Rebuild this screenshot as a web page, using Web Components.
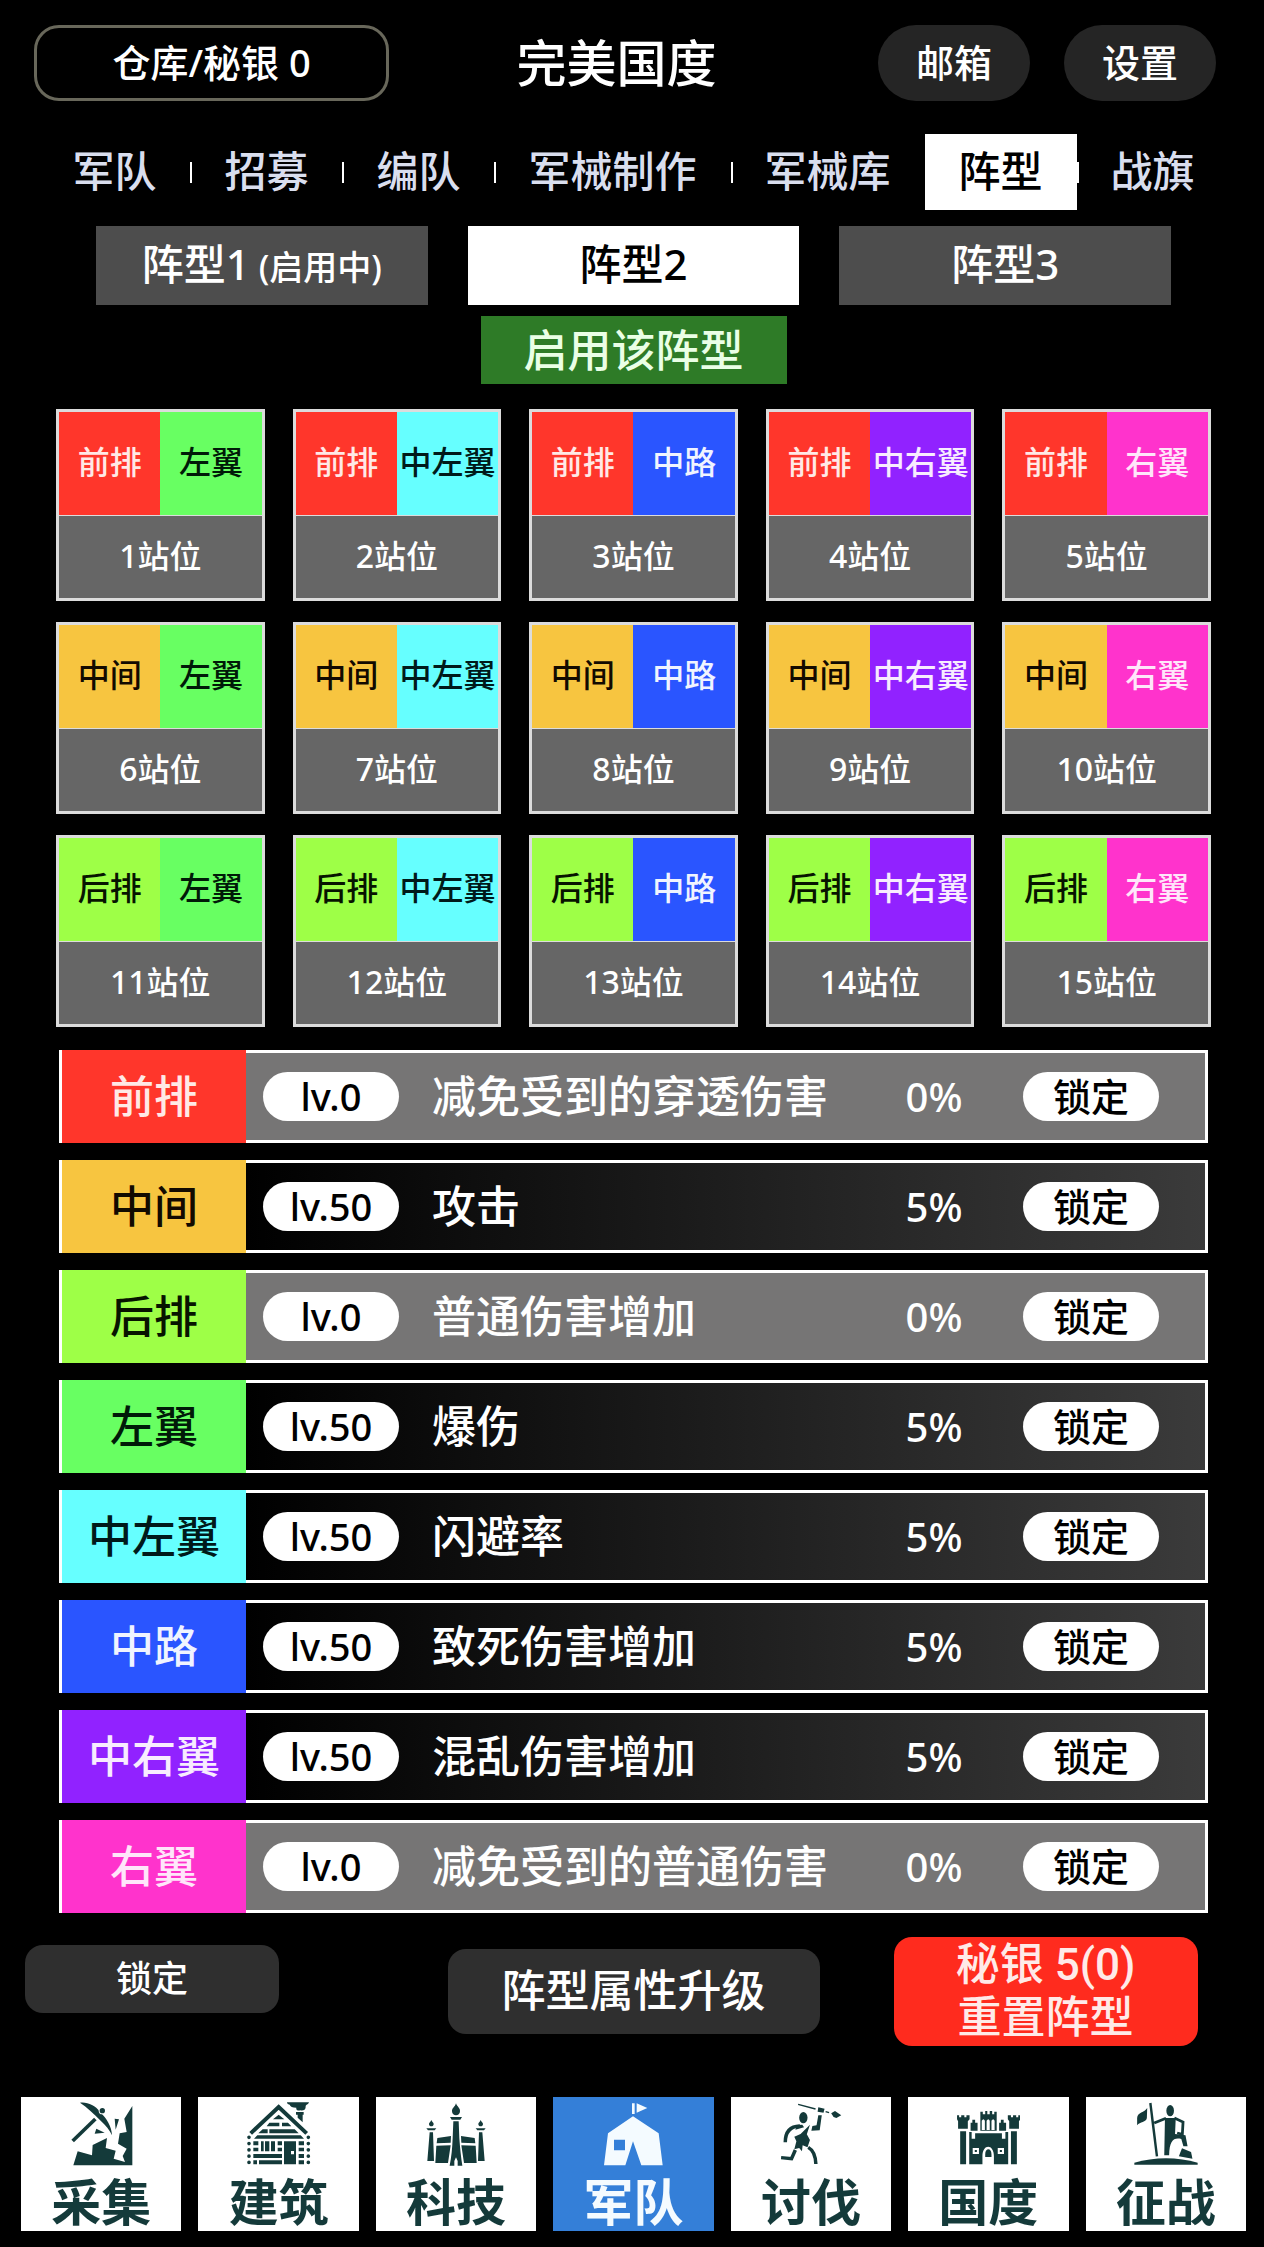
<!DOCTYPE html>
<html lang="zh-CN">
<head>
<meta charset="utf-8">
<meta name="viewport" content="width=device-width, initial-scale=1">
<title>完美国度</title>
<style>
  html {
    background: #000;
  }

  body {
    margin: 0;
    color: #fff;
    font-family: "Noto Sans", "Noto Sans CJK SC", sans-serif;
    font-weight: 500;
  }
</style>
</head>
<body>
<game-app></game-app>

<script>
(function registerFormationScreen() {
  'use strict';

  const ZONES = {
    front: { label: '前排', color: '#ff362b', ink: '#ffe9e6' },
    middle: { label: '中间', color: '#f7c540', ink: '#120a00' },
    back: { label: '后排', color: '#9eff47', ink: '#071400' },
    left: { label: '左翼', color: '#68ff62', ink: '#001a08' },
    midLeft: { label: '中左翼', color: '#66ffff', ink: '#001a1a' },
    center: { label: '中路', color: '#2a55ff', ink: '#f0f4ff' },
    midRight: { label: '中右翼', color: '#9122ff', ink: '#f8ecff' },
    right: { label: '右翼', color: '#ff33cc', ink: '#ffe6fa' }
  };

  const ROWS = ['front', 'middle', 'back'];
  const COLUMNS = ['left', 'midLeft', 'center', 'midRight', 'right'];

  const ATTRIBUTES = [
    { zone: 'front', level: 0, name: '减免受到的穿透伤害', value: '0%' },
    { zone: 'middle', level: 50, name: '攻击', value: '5%' },
    { zone: 'back', level: 0, name: '普通伤害增加', value: '0%' },
    { zone: 'left', level: 50, name: '爆伤', value: '5%' },
    { zone: 'midLeft', level: 50, name: '闪避率', value: '5%' },
    { zone: 'center', level: 50, name: '致死伤害增加', value: '5%' },
    { zone: 'midRight', level: 50, name: '混乱伤害增加', value: '5%' },
    { zone: 'right', level: 0, name: '减免受到的普通伤害', value: '0%' }
  ];

  const TABS = ['军队', '招募', '编队', '军械制作', '军械库', '阵型', '战旗'];

  const ICONS = {
    // pickaxe and cliff
    gather: {
      box: '208 65 192 195',
      body: `
        <path d="M398 80 374 118l7 40-21 4-5 31 26 15-12 22 7 18-34-10 6-24-30-8 4-30-43 21-2 31-43-12-13 42h177z"/>
        <path d="M241 70c22-3 45 8 60 27 20 21 35 43 36 71-7-16-19-30-34-44-20-20-41-40-62-54z"/>
        <circle cx="308" cy="94" r="11" fill="#fff"/>
        <circle cx="308" cy="94" r="8"/>
        <path d="M287 119 219 185" fill="none" stroke="currentColor" stroke-width="11"/>
        <path d="M345 118l13 2-10 31zM290 148l25 12-30 3z"/>`
    },
    // log cabin
    build: {
      box: '741 65 192 195',
      body: `
        <path d="M752 162 836 83l84 79" fill="none" stroke="currentColor" stroke-width="12"/>
        <path d="M861 69h66c-2 8-11 6-10 14 0 9-8 12-16 10-8 2-14-2-12-8-12 0-18-4-20-9-6 0-8-4-8-7zM888 98h23v8h-3v23l-15-14v-9h-5z"/>
        <path d="M836 106l17 14h-34zM808 130h30v11h-38zM846 130h18l10 11h-28zM788 150h15v12h-28zM808 150h76l12 12h-88zM762 178l10-10h130l10 10z"/>
        <path d="M760 186h15v12h-15zM760 205h15v11h-15zM760 224h86v12h-86zM760 243h11v12h-11zM777 243h69v12h-69z"/>
        <path d="M783 186h8v30h-8zM795 186h13v30h-13zM813 186h12v30h-12zM833 186h13v12h-13zM833 205h13v11h-13z"/>
        <path d="M896 186h16v12h-16zM896 205h16v11h-16zM896 224h16v12h-16zM896 243h16v12h-16z"/>
        <path fill-rule="evenodd" d="M852 186h36v69h-36zM873 215v10h9v-10z"/>
        <path d="M747 174v76M925 174v76" fill="none" stroke="currentColor" stroke-width="11" stroke-linecap="round" stroke-dasharray="0 18.8"/>`
    },
    // torches and walls
    tech: {
      box: '192 65 192 195',
      body: `
        <path d="M288 72c3 10 13 14 12 24 0 8-6 12-12 12s-12-4-12-12c-1-9 9-13 12-24zM270 113h36l-5 8h-26z"/>
        <path d="M280 126h16l2 50c2 30 5 58 9 83h-14v-14l-5-11-5 11v14h-14c5-25 8-53 9-83z"/>
        <path d="M214 122c2 6 7 8 7 12s-3 7-7 7-7-3-7-7 5-6 7-12zM199 147h30l-5 6h-20zM209 159h10l3 86h-20z"/>
        <path d="M362 122c2 6 7 8 7 12s-3 7-7 7-7-3-7-7 5-6 7-12zM347 147h30l-5 6h-20zM357 159h10l7 86h-20z"/>
        <path d="M232 176l41-6-1 20-42 2zM229 199l43-1-8 53h-38zM344 176l-41-6 1 20 42 2zM347 199l-43-1 8 53h38z"/>`
    },
    // tent
    army: {
      box: '724 65 192 195',
      body: `
        <path d="M817 72h8v32h-8zM831 72l32 14-32 14z"/>
        <path fill-rule="evenodd" d="M820 111 745 162l-12 96h64l23-72 25 72h64l-12-96zM763 181h33v32h-33z"/>`
    },
    // spear thrower
    crusade: {
      box: '170 65 184 195',
      body: `
        <path d="M225 75l50 14M304 97l10 3" fill="none" stroke="currentColor" stroke-width="4"/>
        <path d="M283 84l18 4-3 12-17-3zM320 102l11-7 18 13-14 8-8-3z"/>
        <ellipse cx="240" cy="115" rx="12" ry="17"/>
        <path d="M283 108h10l-6 45-24 1 3-14 12-2z"/>
        <path d="M230 140c-24 1-42 14-42 49" fill="none" stroke="currentColor" stroke-width="10"/>
        <path d="M222 137l15-1 5 8-25 7zM259 136l-9 29 9 17-7 22-14-6-2 18-8-10-14 4 6-24-6-14 18-8z"/>
        <path d="M254 204c14 8 21 25 22 50M217 212l-11 26-30-3" fill="none" stroke="currentColor" stroke-width="10"/>`
    },
    // castle
    nation: {
      box: '680 65 184 195',
      body: `
        <path d="M683 108h6v6h6v-6h9v6h6v-6h9v12l-5 6v22h-28v-22l-3-6zM865 108h-6v6h-6v-6h-9v6h-6v-6h-9v12l4 6v22h28v-22l4-6z"/>
        <path d="M692 156h17v99h-17zM838 156h17v99h-17zM722 130h5v-9h8v9h7v24h-20zM804 130h5v-9h8v9h7v24h-20z"/>
        <path fill-rule="evenodd" d="M750 97h7v8h7v-10h6v10h7v-10h7v10h6v-8h7v57h-47zM754 152h9v-28q-4-9-9 0zM768 152h9v-28q-4-9-9 0zM782 152h9v-28q-4-9-9 0z"/>
        <path fill-rule="evenodd" d="M718 158h7v20h10v-16h77v16h10v-20h8v97h-41v-24c0-38-33-38-33 0v24h-38zM728 206v18h18v-18zM800 206v18h18v-18z"/>
        <path d="M734 212h6v6h-6zM806 212h6v6h-6zM764 233v-8c0-20 18-20 18 0v8z"/>`
    },
    // standard bearer on a hill
    conquer: {
      box: '1192 65 184 195',
      body: `
        <path d="M1193 256v-6c57-18 125-18 182 0v6z"/>
        <path d="M1239 71l19 160" fill="none" stroke="currentColor" stroke-width="7"/>
        <path d="M1230 86c-8 14-28 12-29 30v22c8-12 26-8 28-22z"/>
        <ellipse cx="1296" cy="94" rx="11" ry="17"/>
        <path d="M1281 116h31l-2 48 30 4 6 33h-12l-6-22c-22-5-34 4-35 49h-14z"/>
        <path d="M1250 131l34-14M1308 116l25 12-2 37-15-4" fill="none" stroke="currentColor" stroke-width="8"/>
        <path d="M1330 207l26 11 4 20-39-7z"/>`
    }
  };

  const NAV = [
    { icon: 'gather', label: '采集' },
    { icon: 'build', label: '建筑' },
    { icon: 'tech', label: '科技' },
    { icon: 'army', label: '军队', active: true },
    { icon: 'crusade', label: '讨伐' },
    { icon: 'nation', label: '国度' },
    { icon: 'conquer', label: '征战' }
  ];

  const BUTTON_RESET = `
    button {
      box-sizing: border-box;
      margin: 0;
      padding: 0;
      border: 0;
      color: inherit;
      background: none;
      font: inherit;
      white-space: nowrap;
      cursor: pointer;
    }
  `;

  class BaseElement extends HTMLElement {
    constructor() {
      super();
      this.attachShadow({ mode: 'open' });
    }

    connectedCallback() {
      this.shadowRoot.innerHTML = `<style>${BUTTON_RESET}${this.styles()}</style>${this.markup()}`;
    }
  }

  class GameHeader extends BaseElement {
    styles() {
      return `
        :host {
          display: flex;
          align-items: center;
          padding: 25px 48px 0 34px;
        }
        button {
          height: 76px;
          padding-bottom: 6px;
          font-size: 38px;
        }
        .vault {
          width: 355px;
          border: 3px solid #68675a;
          border-radius: 25px;
        }
        .round {
          width: 152px;
          margin-left: 34px;
          border-radius: 38px;
          background: #252525;
        }
        h1 {
          flex: 1;
          margin: 0;
          text-align: center;
          font-size: 50px;
          font-weight: 500;
          line-height: 72px;
        }
      `;
    }

    markup() {
      return `
        <button type="button" class="vault">仓库/秘银 0</button>
        <h1><slot></slot></h1>
        <button type="button" class="round">邮箱</button>
        <button type="button" class="round">设置</button>
      `;
    }
  }

  class TabBar extends BaseElement {
    styles() {
      return `
        :host {
          display: block;
          margin: 33px 0 0 3px;
        }
        nav {
          display: flex;
          justify-content: center;
        }
        button {
          height: 76px;
          padding: 0 34px 8px;
          color: #d9deee;
          font-size: 42px;
        }
        button + button {
          background: linear-gradient(#fff, #fff) left center / 2px 21px no-repeat;
        }
        button[aria-current] {
          color: #000;
          background: #fff;
        }
      `;
    }

    markup() {
      const current = this.getAttribute('current');
      return `<nav>${TABS.map((tab) => `
        <button type="button"${tab === current ? ' aria-current="page"' : ''}>${tab}</button>`).join('')}
      </nav>`;
    }
  }

  class FormationPicker extends BaseElement {
    styles() {
      return `
        :host {
          display: flex;
          flex-direction: column;
          align-items: center;
          gap: 11px;
          padding: 16px 93px 0 96px;
        }
        .choices {
          display: flex;
          align-self: stretch;
          gap: 40px;
        }
        .choices button {
          flex: 1;
          height: 79px;
          padding-bottom: 8px;
          background: #4d4d4d;
          font-size: 42px;
        }
        .choices button[aria-pressed="true"] {
          color: #000;
          background: #fff;
        }
        small {
          font-size: 34px;
        }
        .enable {
          height: 68px;
          padding: 0 43px;
          background: #2e7b27;
          color: #eaffe6;
          font-size: 44px;
          line-height: 64px;
        }
      `;
    }

    markup() {
      return `
        <div class="choices">
          <button type="button" aria-pressed="false">阵型1<small> (启用中)</small></button>
          <button type="button" aria-pressed="true">阵型2</button>
          <button type="button" aria-pressed="false">阵型3</button>
        </div>
        <button type="button" class="enable">启用该阵型</button>
      `;
    }
  }

  class FormationSlot extends BaseElement {
    styles() {
      const row = ZONES[this.getAttribute('row')];
      const column = ZONES[this.getAttribute('column')];
      return `
        :host {
          display: block;
          border: 3px solid #dcdcdc;
          background: #666;
          font-size: 32px;
          text-align: center;
          white-space: nowrap;
        }
        .zones {
          display: grid;
          grid-template-columns: 1fr 1fr;
          border-bottom: 1px solid #dcdcdc;
          line-height: 100px;
        }
        .zones span {
          padding-bottom: 3px;
        }
        .row {
          color: ${row.ink};
          background: ${row.color};
        }
        .column {
          color: ${column.ink};
          background: ${column.color};
        }
        .place {
          padding-bottom: 3px;
          line-height: 79px;
        }
      `;
    }

    markup() {
      return `
        <div class="zones">
          <span class="row">${ZONES[this.getAttribute('row')].label}</span>
          <span class="column">${ZONES[this.getAttribute('column')].label}</span>
        </div>
        <div class="place"><slot></slot></div>
      `;
    }
  }

  class FormationGrid extends BaseElement {
    styles() {
      return `
        :host {
          display: grid;
          grid-template-columns: repeat(5, 1fr);
          gap: 21px 28px;
          padding: 25px 53px 0 56px;
        }
      `;
    }

    markup() {
      return ROWS.map((row, r) => COLUMNS.map((column, c) => `
        <formation-slot row="${row}" column="${column}">${r * COLUMNS.length + c + 1}站位</formation-slot>`).join('')).join('');
    }
  }

  class AttributeRow extends BaseElement {
    styles() {
      const zone = ZONES[this.getAttribute('zone')];
      return `
        :host {
          display: flex;
          border-left: 3px solid #fff;
          font-size: 44px;
          line-height: 87px;
          white-space: nowrap;
        }
        .zone {
          width: 184px;
          padding: 3px 0;
          color: ${zone.ink};
          background: ${zone.color};
          text-align: center;
        }
        .body {
          flex: 1;
          display: flex;
          align-items: center;
          padding: 0 46px 0 17px;
          border: 3px solid #fff;
          border-left: 0;
          background: linear-gradient(90deg, #000, #3b3b3b);
        }
        :host([locked]) .body {
          background: #767575;
        }
        .level, button {
          width: 136px;
          height: 49px;
          border-radius: 25px;
          color: #000;
          background: #fff;
          font-size: 38px;
          line-height: 49px;
          text-align: center;
        }
        .name {
          flex: 1;
          padding-left: 33px;
        }
        .value {
          width: 178px;
          font-size: 40px;
          text-align: center;
        }
      `;
    }

    markup() {
      return `
        <div class="zone">${ZONES[this.getAttribute('zone')].label}</div>
        <div class="body">
          <span class="level">lv.${this.getAttribute('level')}</span>
          <span class="name"><slot></slot></span>
          <span class="value">${this.getAttribute('value')}</span>
          <button type="button">锁定</button>
        </div>
      `;
    }
  }

  class AttributeList extends BaseElement {
    styles() {
      return `
        :host {
          display: flex;
          flex-direction: column;
          gap: 17px;
          padding: 23px 56px 0 59px;
        }
      `;
    }

    markup() {
      return ATTRIBUTES.map((item) => `
        <attribute-row zone="${item.zone}" level="${item.level}" value="${item.value}"${item.level === 0 ? ' locked' : ''}>${item.name}</attribute-row>`).join('');
    }
  }

  class FormationActions extends BaseElement {
    styles() {
      return `
        :host {
          display: grid;
          grid-template-columns: 1fr auto 1fr;
          align-items: center;
          padding: 24px 22px 0 25px;
        }
        button {
          border-radius: 18px;
          background: #2f2f2f;
          font-size: 44px;
        }
        .lock {
          align-self: start;
          width: 254px;
          height: 68px;
          margin-top: 8px;
          padding-bottom: 6px;
          font-size: 36px;
        }
        .upgrade {
          height: 85px;
          padding: 0 54px 8px;
        }
        .reset {
          width: 304px;
          height: 109px;
          margin-left: 74px;
          color: #ffeae8;
          background: #ff2b1e;
          font-family: Roboto, "Noto Sans CJK SC", sans-serif;
          line-height: 53px;
        }
      `;
    }

    markup() {
      return `
        <button type="button" class="lock">锁定</button>
        <button type="button" class="upgrade">阵型属性升级</button>
        <button type="button" class="reset">秘银 5(0)<br>重置阵型</button>
      `;
    }
  }

  class NavTile extends BaseElement {
    styles() {
      return `
        :host {
          display: block;
        }
        button {
          display: flex;
          flex-direction: column;
          align-items: center;
          gap: 8px;
          width: 100%;
          height: 134px;
          padding-top: 4px;
          color: #143a3a;
          background: #fff;
          font-size: 50px;
          font-weight: 700;
          line-height: 56px;
        }
        :host([active]) button {
          color: #f4fbff;
          background: #347fd8;
        }
        svg {
          width: 64px;
          height: 65px;
          fill: currentColor;
        }
      `;
    }

    markup() {
      const icon = ICONS[this.getAttribute('icon')];
      return `
        <button type="button"${this.hasAttribute('active') ? ' aria-current="page"' : ''}>
          <svg viewBox="${icon.box}" preserveAspectRatio="none" aria-hidden="true">${icon.body}</svg>
          <span><slot></slot></span>
        </button>
      `;
    }
  }

  class BottomNav extends BaseElement {
    styles() {
      return `
        :host {
          display: block;
          padding: 51px 18px 15px 21px;
        }
        nav {
          display: grid;
          grid-template-columns: repeat(7, 1fr);
          gap: 17px;
        }
      `;
    }

    markup() {
      return `<nav>${NAV.map((item) => `
        <nav-tile icon="${item.icon}"${item.active ? ' active' : ''}>${item.label}</nav-tile>`).join('')}
      </nav>`;
    }
  }

  class GameApp extends BaseElement {
    styles() {
      return `
        :host {
          display: block;
          background: #000;
        }
      `;
    }

    markup() {
      return `
        <game-header>完美国度</game-header>
        <tab-bar current="阵型"></tab-bar>
        <main>
          <formation-picker></formation-picker>
          <formation-grid></formation-grid>
          <attribute-list></attribute-list>
          <formation-actions></formation-actions>
        </main>
        <bottom-nav></bottom-nav>
      `;
    }
  }

  customElements.define('game-header', GameHeader);
  customElements.define('tab-bar', TabBar);
  customElements.define('formation-picker', FormationPicker);
  customElements.define('formation-slot', FormationSlot);
  customElements.define('formation-grid', FormationGrid);
  customElements.define('attribute-row', AttributeRow);
  customElements.define('attribute-list', AttributeList);
  customElements.define('formation-actions', FormationActions);
  customElements.define('nav-tile', NavTile);
  customElements.define('bottom-nav', BottomNav);
  customElements.define('game-app', GameApp);
})();
</script>
</body>
</html>
